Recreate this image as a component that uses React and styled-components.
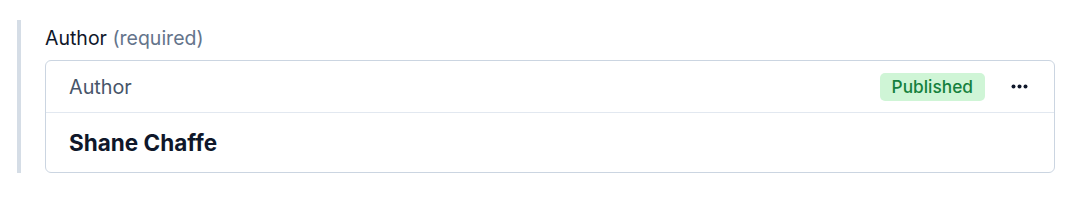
import React from "react";
import styled, { createGlobalStyle } from "styled-components";

const Global = createGlobalStyle`
  body {
    margin: 0;
    background: #ffffff;
    font-family: Inter, "Noto Sans", sans-serif;
  }
`;

export default function App() {
  return (
    <>
      <Global />
      <Page>
        <Field>
          <Label>
            Author <Hint>(required)</Hint>
          </Label>
          <Card>
            <Header>
              <Title>Author</Title>
              <Actions>
                <Badge>Published</Badge>
                <MenuButton aria-label="More">
                  <svg width="17" height="5" viewBox="0 0 17 5">
                    <circle cx="2.5" cy="2.5" r="2" fill="#0f172a" />
                    <circle cx="8.5" cy="2.5" r="2" fill="#0f172a" />
                    <circle cx="14.5" cy="2.5" r="2" fill="#0f172a" />
                  </svg>
                </MenuButton>
              </Actions>
            </Header>
            <Body>
              <Name>Shane Chaffe</Name>
            </Body>
          </Card>
        </Field>
      </Page>
    </>
  );
}

const Page = styled.div`
  padding: 20px 25px 0 17px;
`;
const Field = styled.div`
  border-left: 4px solid #d5dde6;
  padding: 4px 0 0 24px;
`;
const Label = styled.div`
  font-size: 19.5px;
  line-height: 28px;
  color: #0f172a;
  margin-bottom: 8px;
`;
const Hint = styled.span`
  color: #64748b;
`;
const Card = styled.div`
  border: 1px solid #cbd5e1;
  border-radius: 6px;
  background: #fff;
`;
const Header = styled.div`
  display: flex;
  align-items: center;
  justify-content: space-between;
  height: 51px;
  padding: 0 19px 0 23px;
  border-bottom: 1px solid #e2e8f0;
`;
const Title = styled.div`
  font-size: 19.8px;
  color: #475569;
`;
const Actions = styled.div`
  display: flex;
  align-items: center;
  gap: 18px;
`;
const Badge = styled.span`
  background: #cff5d6;
  color: #15803d;
  font-size: 17.3px;
  font-weight: 500;
  line-height: 28px;
  padding: 0 12px;
  border-radius: 5px;
`;
const MenuButton = styled.button`
  display: flex;
  align-items: center;
  justify-content: center;
  width: 32px;
  height: 28px;
  border: none;
  background: none;
  padding: 0;
  cursor: pointer;
`;
const Body = styled.div`
  display: flex;
  align-items: center;
  height: 59px;
  padding: 0 23px;
`;
const Name = styled.div`
  font-size: 22.5px;
  font-weight: 700;
  color: #0f172a;
`;
